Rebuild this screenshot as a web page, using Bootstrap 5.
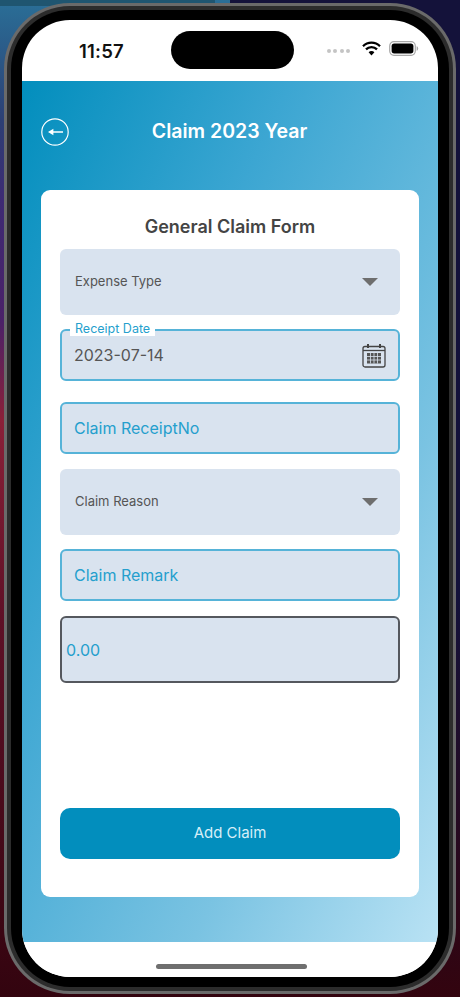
<!DOCTYPE html>
<html lang="en">
<head>
<meta charset="utf-8">
<title>Claim 2023 Year</title>
<link href="https://cdn.jsdelivr.net/npm/bootstrap@5.3.0/dist/css/bootstrap.min.css" rel="stylesheet">
<style>
html,body{height:100%}
body{margin:0;width:460px;height:997px;overflow:hidden;font-family:Inter,"Liberation Sans",sans-serif;
 background:linear-gradient(180deg,#2a6f97 0,#2c3f74 120px,#3d2a73 200px,#4a2168 320px,#8a2038 420px,#5e1026 620px,#33040f 997px);}
.desk-right{position:absolute;right:0;top:0;width:230px;height:997px;background:linear-gradient(180deg,#14123a 0,#14123a 60%,#33040f 100%);z-index:0}
.desk-top{position:absolute;left:0;top:0;width:215px;height:6px;background:#1f5570}
.shell{position:relative;z-index:1;width:452px;height:991px;margin:3px 0 0 4px;padding:3px;border-radius:66px;background:#6a6a6a}
.rim{height:100%;padding:4px;border-radius:63px;background:#2c2c2c}
.bezel{height:100%;padding:10px 11px;border-radius:59px;background:#000}
.screen{height:100%;border-radius:48px;overflow:hidden;background:#fff;display:flex;flex-direction:column}
.status{height:61px;flex:none;padding:0 22px 0 57px;position:relative}
.clock{font-size:18.5px;font-weight:600;color:#111;letter-spacing:.2px;line-height:1;padding-top:22px}
.island{position:absolute;left:149px;top:11px;width:123px;height:38px;border-radius:19px;background:#000}
.dots{gap:2.5px;margin-right:12px;margin-top:5px}
.dots i{display:block;width:4px;height:4px;border-radius:50%;background:#c4c4c4}
.sys{position:absolute;right:19px;top:21px;gap:0}
.main{flex:1;min-height:0;padding:0 19px;background:linear-gradient(115deg,#028ebd 0,#3ca6d2 33%,#7ac3e2 70%,#b9e2f4 100%);display:flex;flex-direction:column}
.top{height:109px;flex:none;position:relative;color:#fff}
.back{position:absolute;left:0;top:37px;width:28px;height:28px}
.ttl{font-size:19.5px;font-weight:600;line-height:1;padding-top:41px;margin-left:-1px}
.sheet{height:707px;flex:none;padding:0 19px;background:#fff;border-radius:9px;border:0;color:#4a4a4a}
.sheet-t{font-size:18px;font-weight:600;color:#444;line-height:1;padding-top:28px;height:59px;margin-bottom:0}
.sel{height:66px;background:#d9e3ef;border-radius:6px;padding:0 22px 0 15px;font-size:13px;color:#555;margin-bottom:14px}
.tri{width:0;height:0;border-left:8.5px solid transparent;border-right:8.5px solid transparent;border-top:8.5px solid #6e6e6e}
.fld{height:52px;background:#d9e3ef;border:2px solid #56b3d8;border-radius:6px;padding:0 12px;font-size:16px;color:#259fcd;position:relative}
.date{margin-bottom:21px;color:#555}
.gap14{margin-bottom:15px}
.lbl{position:absolute;left:8px;top:-10px;padding:0 5px;background:#fff;font-size:12.5px;line-height:15px;color:#259fcd}
.amt{height:67px;background:#d9e3ef;border:2px solid #55585e;border-radius:6px;padding:0 4px;font-size:16px;color:#259fcd}
.act{margin-top:125px;height:51px;width:100%;background:#028ebd;border:0;border-radius:10px;color:#d6eef8;font-size:15px}
.act:hover{background:#028ebd;color:#d6eef8}
.foot{height:35px;flex:none;position:relative;background:#fff}
.bar{width:151px;height:5px;border-radius:3px;background:#6f6f6f;position:absolute;left:134px;top:22px}
</style>
</head>
<body>
<div class="desk-right"></div>
<div class="desk-top"></div>
<div class="shell"><div class="rim"><div class="bezel">
<div class="screen">
  <div class="status">
    <div class="clock">11:57</div>
    <div class="island"></div>
    <div class="sys d-flex align-items-center">
      <div class="dots d-flex"><i></i><i></i><i></i><i></i></div>
      <svg width="19" height="15" viewBox="0 0 19 15" class="me-2"><path d="M1 5.2a12 12 0 0 1 17 0" fill="none" stroke="#000" stroke-width="2.3"/><path d="M4 8.4a7.6 7.6 0 0 1 11 0" fill="none" stroke="#000" stroke-width="2.3"/><path d="M9.5 14.5 6.6 11.3a4 4 0 0 1 5.8 0z" fill="#000"/></svg>
      <svg width="30" height="15" viewBox="0 0 30 15"><rect x=".7" y=".7" width="25.6" height="13.6" rx="4.2" fill="none" stroke="#a8a8a8" stroke-width="1.2"/><rect x="2.6" y="2.6" width="21.8" height="9.8" rx="2.6" fill="#000"/><path d="M27.6 5.2c1 .3 1.6 1.2 1.6 2.3s-.6 2-1.6 2.3z" fill="#a8a8a8"/></svg>
    </div>
  </div>
  <div class="main">
    <div class="top text-center">
      <svg class="back" viewBox="0 0 28 28"><circle cx="14" cy="14" r="13.2" fill="none" stroke="#fff" stroke-width="1.2"/><path d="M12 14h10" stroke="#fff" stroke-width="1.6"/><path d="M7 14l5.4-3.2v6.4z" fill="#fff"/></svg>
      <div class="ttl">Claim 2023 Year</div>
    </div>
    <form class="sheet">
      <div class="sheet-t text-center">General Claim Form</div>
      <div class="sel d-flex align-items-center justify-content-between"><span>Expense Type</span><span class="tri"></span></div>
      <div class="fld date d-flex align-items-center justify-content-between">
        <span class="lbl">Receipt Date</span><span>2023-07-14</span>
        <svg width="24" height="25" viewBox="0 0 24 25" class="flex-none"><rect x="1" y="3.5" width="22" height="20.5" rx="2" fill="none" stroke="#444" stroke-width="1.3"/><path d="M1 7.5h22" stroke="#444" stroke-width="1.3"/><path d="M6 1v4M18 1v4" stroke="#444" stroke-width="2"/><path d="M7 3.5h10" stroke="#444" stroke-width="1"/><rect x="5" y="10" width="14" height="10.5" fill="#555"/><path d="M5 13.5h14M5 17h14M8.5 10v10.5M12 10v10.5M15.5 10v10.5" stroke="#d9e3ef" stroke-width=".8"/></svg>
      </div>
      <div class="fld gap14 d-flex align-items-center">Claim ReceiptNo</div>
      <div class="sel d-flex align-items-center justify-content-between"><span>Claim Reason</span><span class="tri"></span></div>
      <div class="fld gap14 d-flex align-items-center">Claim Remark</div>
      <div class="amt d-flex align-items-center">0.00</div>
      <button type="button" class="btn act">Add Claim</button>
    </form>
  </div>
  <div class="foot"><div class="bar"></div></div>
</div>
</div></div></div>
<script src="https://cdn.jsdelivr.net/npm/bootstrap@5.3.0/dist/js/bootstrap.bundle.min.js"></script>
</body>
</html>
